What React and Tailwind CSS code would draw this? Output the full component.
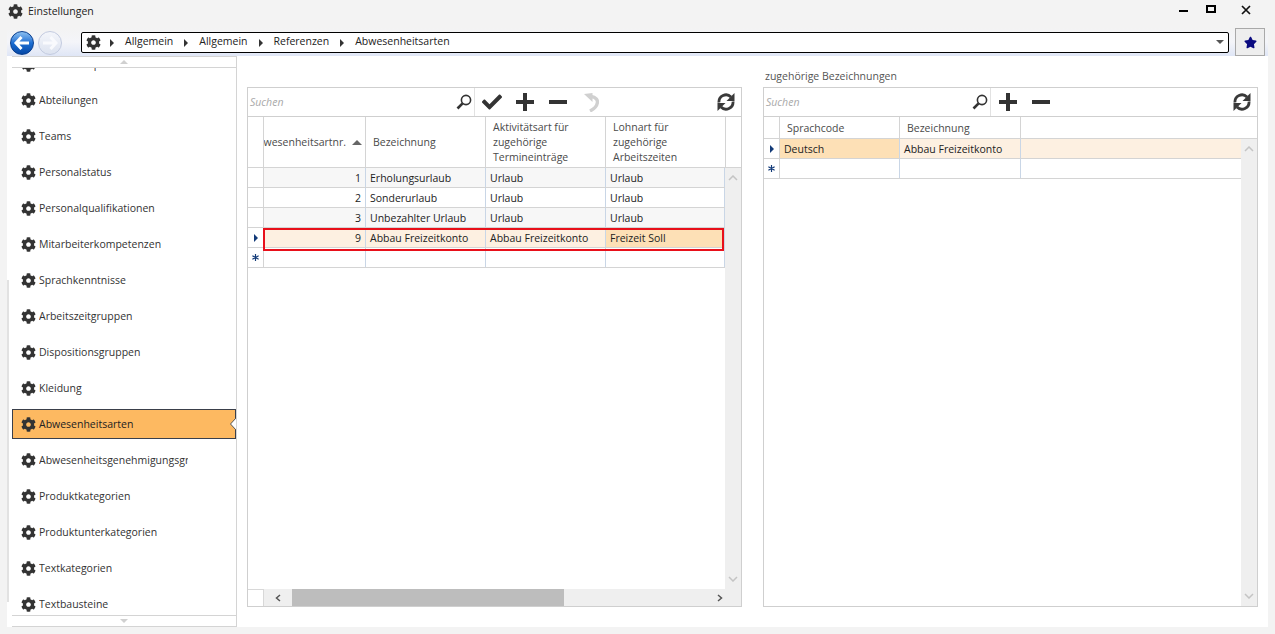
import React from 'react';
import { FaCog, FaCheck, FaStar } from 'react-icons/fa';

const font = 'font-["Open_Sans","Liberation_Sans",sans-serif]';

const menu = [
  'Mitarbeiterprofile', 'Abteilungen', 'Teams', 'Personalstatus', 'Personalqualifikationen',
  'Mitarbeiterkompetenzen', 'Sprachkenntnisse', 'Arbeitszeitgruppen', 'Dispositionsgruppen',
  'Kleidung', 'Abwesenheitsarten', 'Abwesenheitsgenehmigungsgruppen', 'Produktkategorien',
  'Produktunterkategorien', 'Textkategorien', 'Textbausteine',
];

function Triangle({ className }) {
  return (
    <svg width="4" height="8" viewBox="0 0 4 8" className={className}>
      <path d="M0 0 L4 4 L0 8 Z" fill="currentColor" />
    </svg>
  );
}

function BackButton() {
  return (
    <div className="w-[24px] h-[24px] rounded-full border border-[#0a3f8f] bg-gradient-to-b from-[#8cc0f0] via-[#1c6ed2] to-[#0647a6] flex items-center justify-center shrink-0">
      <svg width="18" height="16" viewBox="0 0 18 16">
        <path d="M8.500 2 L3 8 L8.500 14 M3.500 8 H16" fill="none" stroke="#ffffff" strokeWidth="3" />
      </svg>
    </div>
  );
}

function ForwardButton() {
  return (
    <div className="ml-[4px] w-[24px] h-[24px] rounded-full border border-[#c3cbe0] bg-gradient-to-b from-[#f4f6fb] to-[#dde3f0] flex items-center justify-center shrink-0">
      <svg width="18" height="16" viewBox="0 0 18 16">
        <path d="M9.500 2 L15 8 L9.500 14 M14.500 8 H2" fill="none" stroke="#f9fafd" strokeWidth="3" />
      </svg>
    </div>
  );
}

function Crumb({ children }) {
  return (
    <>
      <span className="text-[#222]">{children}</span>
      <Triangle className="text-[#333] mt-[2px] mx-[11px]" />
    </>
  );
}

function SearchIcon() {
  return (
    <svg width="16" height="16" viewBox="0 0 16 16">
      <circle cx="10" cy="6" r="4.600" fill="none" stroke="#333" strokeWidth="1.600" />
      <path d="M6.600 9.400 L1.500 14.500" stroke="#333" strokeWidth="2.600" />
    </svg>
  );
}

function PlusIcon() {
  return (
    <svg width="20" height="20" viewBox="0 0 20 20">
      <path d="M8 1 H12 V8 H19 V12 H12 V19 H8 V12 H1 V8 H8 Z" fill="#333" />
    </svg>
  );
}

function MinusIcon() {
  return (
    <svg width="20" height="20" viewBox="0 0 20 20">
      <rect x="1" y="8" width="18" height="4" fill="#333" />
    </svg>
  );
}

function UndoIcon() {
  return (
    <svg width="16" height="20" viewBox="0 0 16 20">
      <path d="M1 2 L9.500 1 L9.500 10 Z" fill="#d0d0d0" />
      <path d="M8 4.500 C13 5 15 8 14.300 11 C13.800 14 11 17 7 19" fill="none" stroke="#d0d0d0" strokeWidth="3.400" />
    </svg>
  );
}

function RefreshIcon() {
  return (
    <svg width="20" height="20" viewBox="0 0 20 20">
      <path d="M3 10.500 A7 7 0 0 1 15 5" fill="none" stroke="#3a3a3a" strokeWidth="2.800" />
      <path d="M18.500 1 V9 H10.500 Z" fill="#3a3a3a" />
      <path d="M17 9.500 A7 7 0 0 1 5 15" fill="none" stroke="#3a3a3a" strokeWidth="2.800" />
      <path d="M1.500 19 V11 H9.500 Z" fill="#3a3a3a" />
    </svg>
  );
}

function Toolbar({ extended }) {
  return (
    <div className="h-[29px] flex items-center border-b border-[#cfcfcf] shrink-0">
      <div className="w-[227px] h-full flex items-center justify-between pl-[2px] pr-[2px] border-r border-[#e2e2e2]">
        <span className="italic text-[#a9a9a9] mt-[2px]">Suchen</span>
        <SearchIcon />
      </div>
      {extended && <div className="ml-[7px] mr-[13px] text-[#333]"><FaCheck size={20} /></div>}
      <div className={extended ? 'mr-[13px]' : 'ml-[7px] mr-[13px]'}><PlusIcon /></div>
      <div className="mr-[15px]"><MinusIcon /></div>
      {extended && <UndoIcon />}
      <div className="ml-auto mr-[5px]"><RefreshIcon /></div>
    </div>
  );
}

function HeadCell({ width, children }) {
  return (
    <div className="h-full flex items-center border-r border-[#d4d4d4] shrink-0 overflow-hidden" style={{ width }}>
      {children}
    </div>
  );
}

function Cell({ width, align, bg, children }) {
  return (
    <div className={`h-full flex items-center border-r border-[#c9d6e6] shrink-0 px-[4px] pt-[3px] ${align === 'right' ? 'justify-end' : ''} ${bg || ''}`} style={{ width }}>
      {children}
    </div>
  );
}

function RowHead({ mark }) {
  return (
    <div className="w-[16px] h-full flex items-center justify-center border-r border-[#d4d4d4] shrink-0 bg-white">
      {mark === 'current' && <Triangle className="text-[#123a78]" />}
      {mark === 'new' && (
        <svg width="7" height="7" viewBox="0 0 9 9">
          <path d="M4.500 0 V9 M0.500 2.200 L8.500 6.800 M8.500 2.200 L0.500 6.800" stroke="#123a78" strokeWidth="1.500" />
        </svg>
      )}
    </div>
  );
}

function ScrollV() {
  return (
    <div className="w-[16px] shrink-0 bg-[#efefef] flex flex-col items-center justify-between py-[7px]">
      <svg width="10" height="6" viewBox="0 0 10 6"><path d="M1 5 L5 1 L9 5" fill="none" stroke="#c4c4c4" strokeWidth="1.500" /></svg>
      <svg width="10" height="6" viewBox="0 0 10 6"><path d="M1 1 L5 5 L9 1" fill="none" stroke="#c4c4c4" strokeWidth="1.500" /></svg>
    </div>
  );
}

const mainRows = [
  ['1', 'Erholungsurlaub', 'Urlaub', 'Urlaub'],
  ['2', 'Sonderurlaub', 'Urlaub', 'Urlaub'],
  ['3', 'Unbezahlter Urlaub', 'Urlaub', 'Urlaub'],
];

function MainGrid() {
  return (
    <div className="w-[495px] h-[520px] border border-[#cfcfcf] flex flex-col shrink-0 ml-[10px] mt-[31px]">
      <Toolbar extended />
      <div className="h-[51px] flex border-b border-[#d4d4d4] shrink-0 text-[#4a4a4a]">
        <HeadCell width={16} />
        <HeadCell width={102}>
          <div className="flex items-center w-full justify-end pr-[3px] whitespace-nowrap">
            <span className="overflow-hidden w-[83px] flex justify-end mt-[2px]">Abwesenheitsartnr.</span>
            <svg width="10" height="5" viewBox="0 0 10 5" className="ml-[6px] shrink-0"><path d="M0 5 L5 0 L10 5 Z" fill="#666" /></svg>
          </div>
        </HeadCell>
        <HeadCell width={120}><span className="pl-[7px] mt-[2px]">Bezeichnung</span></HeadCell>
        <HeadCell width={120}><span className="pl-[7px] leading-[15px]">Aktivitätsart für<br />zugehörige<br />Termineinträge</span></HeadCell>
        <HeadCell width={120}><span className="pl-[7px] leading-[15px]">Lohnart für<br />zugehörige<br />Arbeitszeiten</span></HeadCell>
      </div>
      <div className="flex-1 flex min-h-0">
        <div className="w-[477px] shrink-0 relative">
          {mainRows.map((r, i) => (
            <div key={r[0]} className={`h-[20px] flex border-b border-[#d4d4d4] text-[#222] ${i % 2 === 0 ? 'bg-[#f7f7f7]' : 'bg-white'}`}>
              <RowHead />
              <Cell width={102} align="right">{r[0]}</Cell>
              <Cell width={120}>{r[1]}</Cell>
              <Cell width={120}>{r[2]}</Cell>
              <Cell width={119}>{r[3]}</Cell>
            </div>
          ))}
          <div className="h-[20px] flex border-b border-[#d4d4d4] text-[#222] bg-[#fdf0e1]">
            <RowHead mark="current" />
            <Cell width={102} align="right">9</Cell>
            <Cell width={120}>Abbau Freizeitkonto</Cell>
            <Cell width={120}>Abbau Freizeitkonto</Cell>
            <Cell width={119} bg="bg-[#fde0b6]">Freizeit Soll</Cell>
          </div>
          <div className="h-[20px] flex border-b border-[#d4d4d4]">
            <RowHead mark="new" />
            <Cell width={102} />
            <Cell width={120} />
            <Cell width={120} />
            <Cell width={119} />
          </div>
          <div className="absolute left-[15px] top-[60px] w-[461px] h-[23px] border-2 border-[#e8101a] pointer-events-none" />
        </div>
        <ScrollV />
      </div>
      <div className="h-[17px] flex shrink-0">
        <div className="w-[16px] border-r border-t border-[#d8d8d8]" />
        <div className="flex-1 bg-[#efefef] flex items-center">
          <div className="w-[28px] flex justify-center">
            <svg width="6" height="8" viewBox="0 0 6 8"><path d="M5 1 L1.500 4 L5 7" fill="none" stroke="#555" strokeWidth="1.500" /></svg>
          </div>
          <div className="w-[272px] h-full bg-[#bdbdbd]" />
          <div className="ml-auto w-[28px] flex justify-center mr-[7px]">
            <svg width="6" height="8" viewBox="0 0 6 8"><path d="M1 1 L4.500 4 L1 7" fill="none" stroke="#555" strokeWidth="1.500" /></svg>
          </div>
        </div>
      </div>
    </div>
  );
}

function DetailGrid() {
  return (
    <div className="ml-[21px] shrink-0">
      <div className="h-[31px] pt-[13px] pl-[2px] text-[#555] leading-[15px]">zugehörige Bezeichnungen</div>
      <div className="w-[495px] h-[520px] border border-[#cfcfcf] flex flex-col">
        <Toolbar />
        <div className="h-[22px] flex border-b border-[#d4d4d4] shrink-0 text-[#4a4a4a]">
          <HeadCell width={16} />
          <HeadCell width={120}><span className="pl-[7px] mt-[2px]">Sprachcode</span></HeadCell>
          <HeadCell width={121}><span className="pl-[7px] mt-[2px]">Bezeichnung</span></HeadCell>
        </div>
        <div className="flex-1 flex min-h-0">
          <div className="w-[477px] shrink-0">
            <div className="h-[20px] flex border-b border-[#d4d4d4] text-[#222] bg-[#fdf0e1]">
              <RowHead mark="current" />
              <Cell width={120} bg="bg-[#fde0b6]">Deutsch</Cell>
              <Cell width={121}>Abbau Freizeitkonto</Cell>
            </div>
            <div className="h-[20px] flex border-b border-[#d4d4d4]">
              <RowHead mark="new" />
              <Cell width={120} />
              <Cell width={121} />
            </div>
          </div>
          <ScrollV />
        </div>
      </div>
    </div>
  );
}

function Sidebar() {
  return (
    <div className="w-[225px] h-[571px] flex flex-col border-r border-[#d4d4d4] shrink-0">
      <div className="h-[12px] border-y border-[#d4d4d4] flex items-center justify-center shrink-0">
        <svg width="8" height="4" viewBox="0 0 8 4"><path d="M0 4 L4 0 L8 4 Z" fill="#d0d0d0" /></svg>
      </div>
      <div className="flex-1 min-h-0 overflow-hidden">
        <div className="-mt-[22px]">
          {menu.map((m) => (
            <div key={m} className="h-9 flex items-center">
              {m === 'Abwesenheitsarten' ? (
                <div className="h-[30px] w-[225px] flex items-center bg-[#fdb961] border border-[#3a3f4a] pl-[8px] relative">
                  <FaCog size={15} className="text-[#333] shrink-0" />
                  <span className="ml-[3px] mt-[2px] text-[#222] whitespace-nowrap">{m}</span>
                  <svg width="6" height="12" viewBox="0 0 6 12" className="absolute -right-px top-[8px]">
                    <path d="M6 0 L0.500 6 L6 12 Z" fill="#fff" />
                    <path d="M6 0 L0.500 6 L6 12" fill="none" stroke="#555" strokeWidth="1" />
                  </svg>
                </div>
              ) : (
                <div className="pl-[9px] flex items-center w-full">
                  <FaCog size={15} className="text-[#333] shrink-0" />
                  <span className="ml-[3px] mt-[2px] text-[#333] whitespace-nowrap overflow-hidden w-[149px]">{m}</span>
                </div>
              )}
            </div>
          ))}
        </div>
      </div>
      <div className="h-[12px] border-y border-[#d4d4d4] flex items-center justify-center shrink-0 bg-white">
        <svg width="8" height="4" viewBox="0 0 8 4"><path d="M0 0 L4 4 L8 0 Z" fill="#d0d0d0" /></svg>
      </div>
    </div>
  );
}

export default function App() {
  return (
    <div className={`w-[1275px] h-[634px] overflow-hidden bg-[#f3f3f3] text-[10.5px] ${font}`}>
      <div className="h-[28px] flex items-start pt-[4px] text-[#222]">
        <FaCog size={15} className="ml-[8px] text-[#333]" />
        <span className="ml-[5px] leading-[14px]">Einstellungen</span>
        <div className="ml-auto flex items-start">
          <div className="w-[9px] h-[2px] bg-black mt-[6px]" />
          <div className="ml-[18px] w-[10px] h-[8px] border-2 border-black mt-[1px]" />
          <svg width="10" height="10" viewBox="0 0 10 10" className="ml-[25px] mr-[24px] mt-[1px]"><path d="M1 1 L9 9 M9 1 L1 9" stroke="#111" strokeWidth="1.700" /></svg>
        </div>
      </div>
      <div className="h-[28px] ml-[7px] w-[1261px] flex items-center bg-gradient-to-b from-[#f3f3f3] via-[#f4f5f9] to-[#dfe6f6]">
        <div className="ml-[3px] mt-[2px]"><BackButton /></div>
        <div className="mt-[2px]"><ForwardButton /></div>
        <div className="ml-[19px] w-[1148px] h-[21px] border border-black rounded-[2px] bg-white flex items-center shrink-0">
          <FaCog size={15} className="ml-[4px] mr-[9px] text-[#333]" />
          <Triangle className="text-[#333] mt-[2px] mr-[11px]" />
          <Crumb>Allgemein</Crumb>
          <Crumb>Allgemein</Crumb>
          <Crumb>Referenzen</Crumb>
          <span className="text-[#222]">Abwesenheitsarten</span>
          <svg width="8" height="4" viewBox="0 0 8 4" className="ml-auto mr-[4px]"><path d="M0 0 L8 0 L4 4 Z" fill="#555" /></svg>
        </div>
        <div className="ml-[6px] w-[30px] h-[28px] border border-[#a9a9a9] bg-[#eeeeee] flex items-center justify-center text-[#0b0b80] shrink-0">
          <FaStar size={13} />
        </div>
      </div>
      <div className="ml-[7px] w-[1261px] h-[571px] bg-white flex">
        <div className="w-[5px] shrink-0 pt-[224px]">
          <div className="w-[2px] h-[322px] bg-[#e2e2e2]" />
        </div>
        <Sidebar />
        <MainGrid />
        <DetailGrid />
      </div>
    </div>
  );
}
